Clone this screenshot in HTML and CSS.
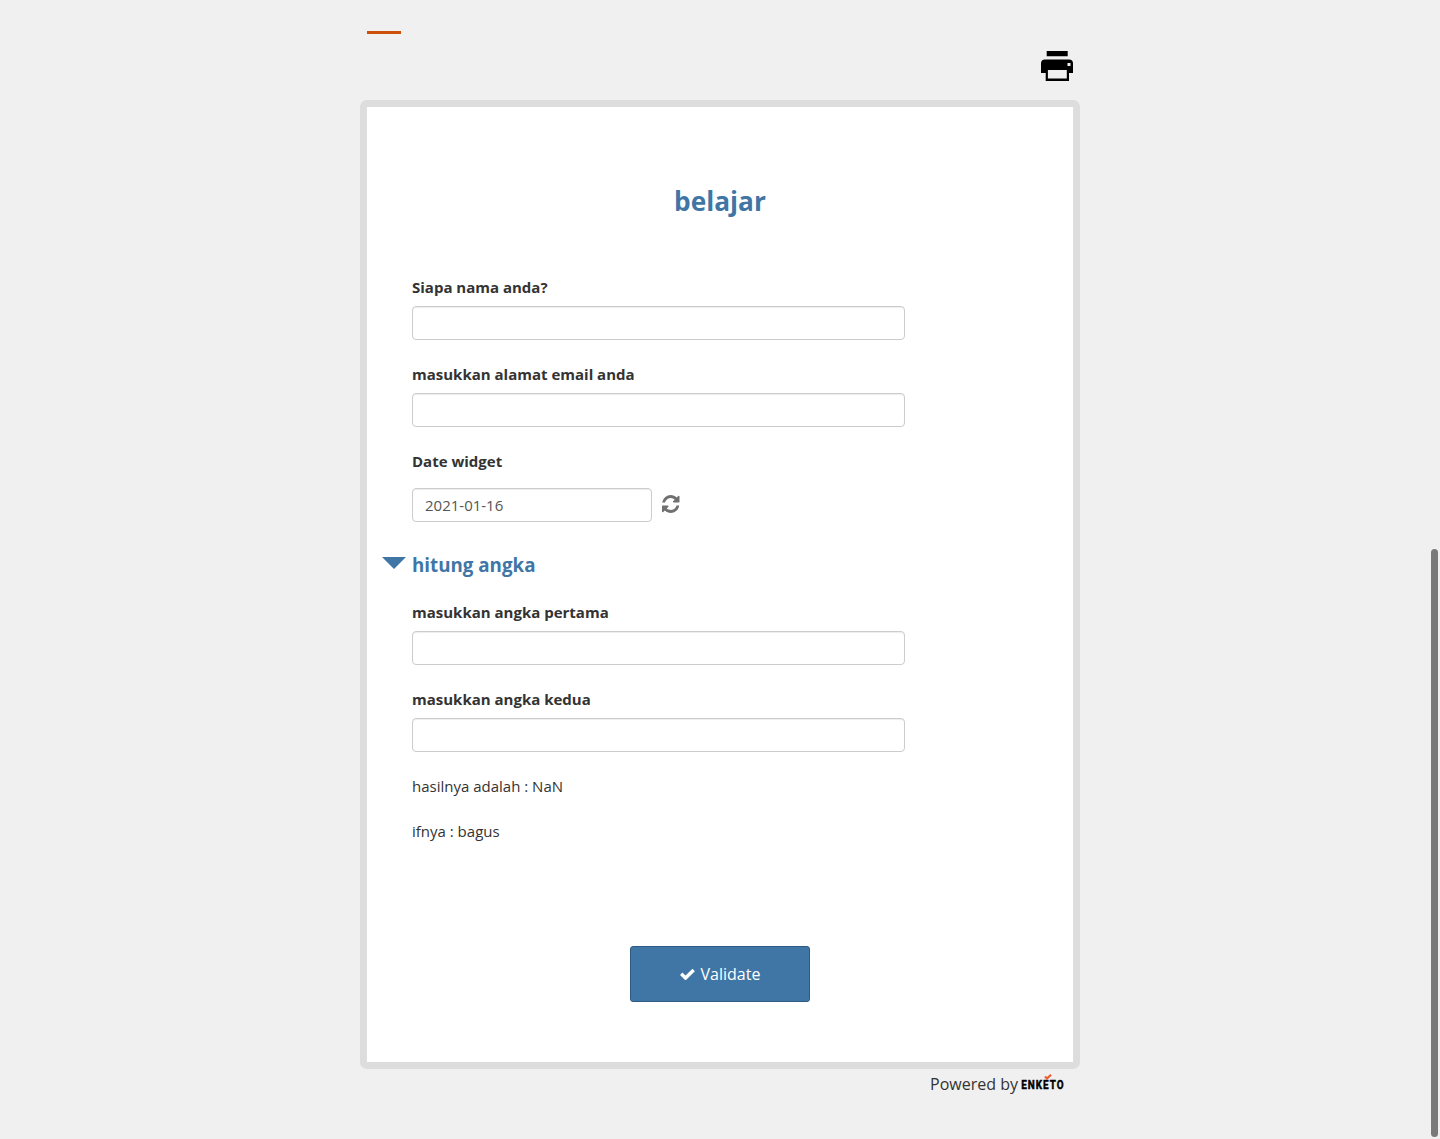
FILE: index.html
```html
<!DOCTYPE html>
<html lang="id">
<head>
<meta charset="utf-8">
<title>belajar</title>
<link rel="stylesheet" href="styles.css">
</head>
<body>
<div class="main">
  <header class="form-header">
    <span class="logo-dash"></span>
    <button class="print" aria-label="Print">
      <svg width="32" height="30" viewBox="0 0 32 30"><path fill-rule="evenodd" d="M5.700 0h21v5.300H5.700zM4 8.500h24a4 4 0 0 1 4 4V22h-4v8H4.700v-8H0v-9.500a4 4 0 0 1 4-4zM6.900 19v8.600h18.900v-8.600zM26.500 12v3h3v-3z"/></svg>
    </button>
  </header>
  <form class="card">
    <h1 class="title">belajar</h1>
    <label class="question"><span class="label">Siapa nama anda?</span><input class="field" type="text"></label>
    <label class="question"><span class="label">masukkan alamat email anda</span><input class="field" type="text"></label>
    <div class="question date">
      <span class="label">Date widget</span>
      <div class="date-row">
        <input class="field" type="text" value="2021-01-16">
        <svg class="reset" width="17.500" height="18" viewBox="0 0 1536 1536" preserveAspectRatio="none"><path d="M1511 928q0 5-1 7-64 268-268 434.500T764 1536q-146 0-282.500-55T238 1324l-129 129q-19 19-45 19t-45-19-19-45V960q0-26 19-45t45-19h448q26 0 45 19t19 45-19 45l-137 137q71 66 161 102t187 36q134 0 250-65t186-179q11-17 53-117 8-23 30-23h192q13 0 22.500 9.500t9.500 22.500zm25-800v448q0 26-19 45t-45 19h-448q-26 0-45-19t-19-45 19-45l138-138Q969 256 768 256q-134 0-250 65T332 500q-11 17-53 117-8 23-30 23H50q-13 0-22.500-9.500T18 608v-7q65-268 270-434.500T768 0q146 0 284 55.500T1297 212l130-129q19-19 45-19t45 19 19 45z"/></svg>
      </div>
    </div>
    <section class="group">
      <h2 class="group-title"><svg class="caret" width="24" height="12" viewBox="0 0 24 12"><path d="M0 0h24L12 12z"/></svg>hitung angka</h2>
      <label class="question"><span class="label">masukkan angka pertama</span><input class="field" type="text"></label>
      <label class="question"><span class="label">masukkan angka kedua</span><input class="field" type="text"></label>
      <p class="note">hasilnya adalah : NaN</p>
      <p class="note">ifnya : bagus</p>
    </section>
    <button class="validate" type="button">
      <svg width="15" height="12" viewBox="0 0 15 12"><path d="M1.200 5.800l4.300 4.200L13.700 2" fill="none" stroke="#fff" stroke-width="3.500"/></svg>
      Validate
    </button>
  </form>
  <footer class="powered">
    <span>Powered by</span>
    <svg class="enketo" width="44" height="20" viewBox="0 0 44 20"><text x="0.300" y="15.400" textLength="43.200" lengthAdjust="spacingAndGlyphs">ENKETO</text><path d="M24 2.500l2 2L30 .8" fill="none" stroke="#f15a29" stroke-width="2.200"/></svg>
  </footer>
</div>
<div class="scroll-thumb"></div>
</body>
</html>
```
FILE: styles.css
```css
* { box-sizing: border-box; }
body {
  margin: 0;
  height: 1139px;
  overflow: hidden;
  background: #f0f0f0;
  color: #333;
  font: 15px/21px "Open Sans", sans-serif;
}
.main { width: 720px; margin: 0 auto; }
.form-header {
  height: 100px;
  padding: 31px 7px 0;
  display: flex;
  justify-content: space-between;
  align-items: flex-start;
}
.logo-dash { width: 34px; height: 3px; background: #ce4f07; }
.print { margin: 20px 0 0; padding: 0; border: 0; background: none; }
.print svg { display: block; }
.card {
  height: 969px;
  padding: 76px 45px 0 45px;
  border: 7px solid #ddd;
  border-radius: 7px;
  background: #fff;
}
.title {
  margin: 0 0 58px;
  text-align: center;
  font-size: 26.25px;
  line-height: 36px;
  color: #3f76a6;
}
.question { display: block; margin-bottom: 24px; }
.label { display: block; font-weight: 700; margin-bottom: 8px; }
.field {
  display: block;
  width: 493px;
  height: 34px;
  padding: 6px 12px;
  border: 1px solid #ccc;
  border-radius: 4px;
  background: #fff;
  box-shadow: inset 0 1px 1px rgba(0, 0, 0, .075);
  color: #555;
  font: inherit;
}
.date .label { margin-bottom: 16px; }
.date .field { width: 240px; }
.date-row { display: flex; gap: 10px; }
.reset { margin-top: 7px; fill: #707070; }
.group-title {
  display: flex;
  align-items: flex-start;
  gap: 6px;
  margin: 29px 0 23px -30px;
  color: #3f76a6;
  font-size: 18.75px;
  line-height: 28px;
}
.caret { margin-top: 6px; fill: #3f76a6; }
.note { margin: 0 0 24px; }
.validate {
  display: flex;
  align-items: center;
  justify-content: center;
  gap: 6px;
  width: 180px;
  height: 56px;
  margin: 104px auto 0;
  padding: 0;
  border: 1px solid #2d5b84;
  border-radius: 3px;
  background: #3f76a6;
  color: #fff;
  font: 16px/22px "Open Sans", sans-serif;
}
.powered {
  display: flex;
  justify-content: flex-end;
  gap: 3px;
  padding: 4px 15px 0 0;
  font-size: 16px;
  line-height: 22px;
}
.enketo { margin-top: 1px; overflow: visible; }
.enketo text {
  font: 700 13px/16px Roboto, sans-serif;
  letter-spacing: 1.3px;
  fill: #000;
  stroke: #000;
  stroke-width: .5px;
  stroke-linejoin: round;
}
.scroll-thumb {
  position: absolute;
  top: 549px;
  right: 2px;
  width: 7px;
  height: 588px;
  border-radius: 4px;
  background: #797979;
}
```
